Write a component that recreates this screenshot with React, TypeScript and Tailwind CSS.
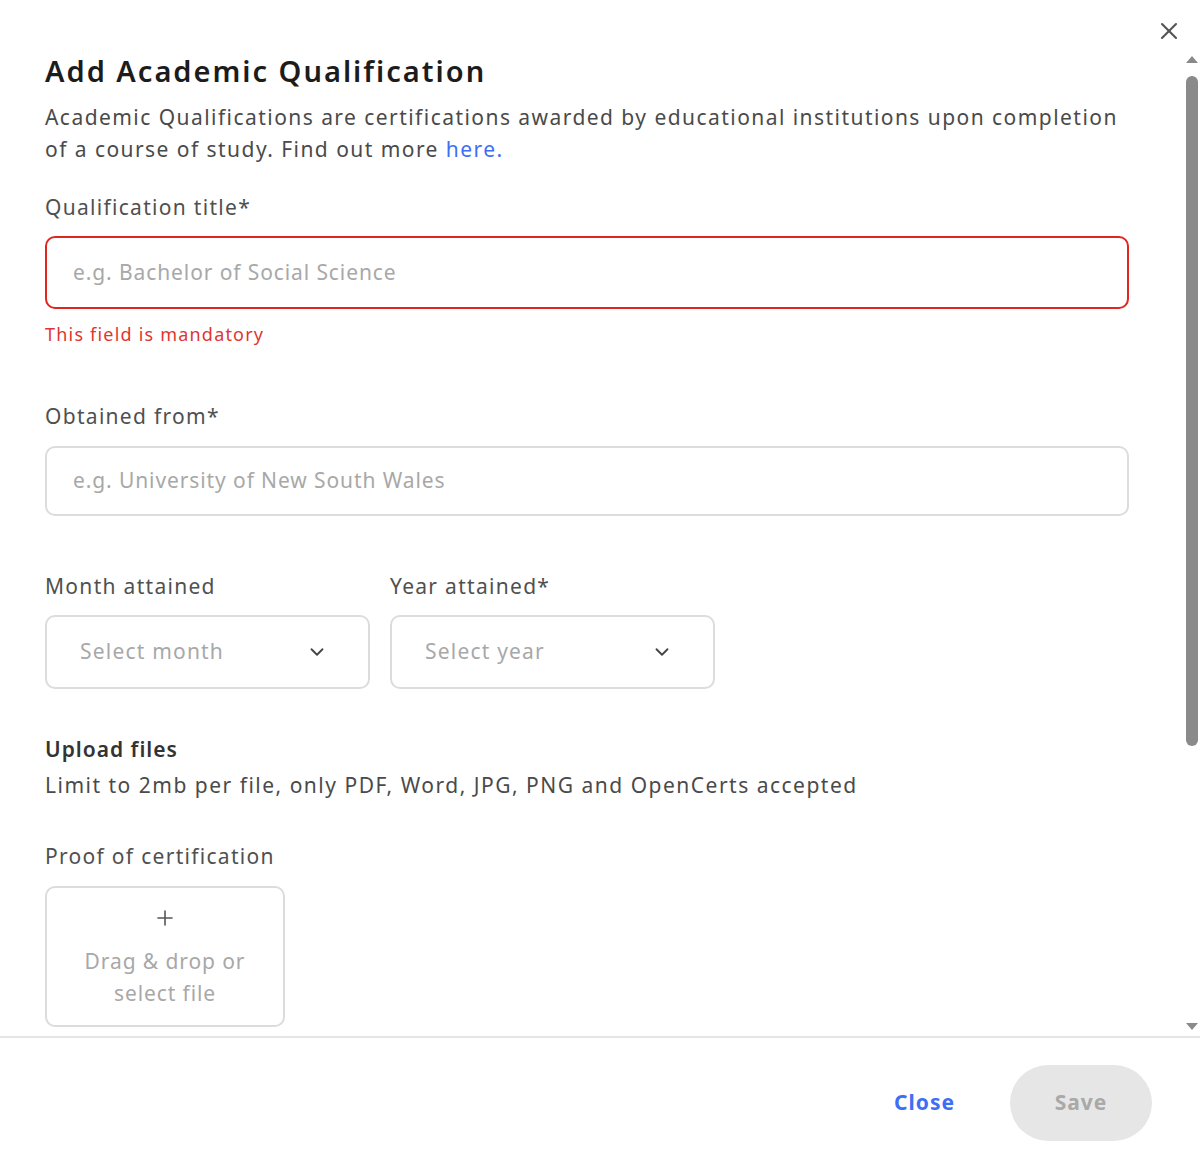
import React from 'react';
import { X, ChevronDown, Plus } from 'lucide-react';

const Label = ({ children }: { children: React.ReactNode }) => (
  <p className="text-[21px] leading-[32px] tracking-[1.3px] text-[#505050]">{children}</p>
);

const SelectBox = ({ placeholder }: { placeholder: string }) => (
  <div className="w-[325px] h-[74px] border-2 border-[#dcdcdc] rounded-[10px] flex items-center justify-between pl-[33px] pr-[40px]">
    <span className="text-[21px] tracking-[1.2px] text-[#a8a8a8]">{placeholder}</span>
    <ChevronDown size={22} strokeWidth={2} className="text-[#444]" />
  </div>
);

const Scrollbar = () => (
  <div className="w-[16px] flex flex-col items-center pt-[3px] pb-[6px]">
    <div className="w-0 h-0 border-l-[6px] border-r-[6px] border-b-[7px] border-l-transparent border-r-transparent border-b-[#8a8a8a]" />
    <div className="w-[12px] h-[670px] mt-[13px] rounded-full bg-[#8a8a8a]" />
    <div className="flex-1" />
    <div className="w-0 h-0 border-l-[6px] border-r-[6px] border-t-[7px] border-l-transparent border-r-transparent border-t-[#8a8a8a]" />
  </div>
);

export default function App() {
  return (
    <div className="w-[1200px] h-[1164px] bg-white flex flex-col font-['Noto_Sans',sans-serif] overflow-hidden">
      <div className="h-[53px] flex justify-end items-start pt-[17px] pr-[17px]">
        <X size={28} strokeWidth={1.8} className="text-[#555]" />
      </div>

      <div className="flex h-[983px]">
        <div className="flex-1 pl-[45px] pr-[55px]">
          <h2 className="text-[29px] leading-[36px] tracking-[2px] font-semibold text-[#1c1c1c]">Add Academic Qualification</h2>
          <p className="mt-[12px] text-[21px] leading-[32px] tracking-[1.45px] text-[#4a4a4a]">
            Academic Qualifications are certifications awarded by educational institutions upon completion of a course of study. Find out more <span className="text-[#3d6ef5]">here.</span>
          </p>

          <div className="mt-[26px]">
            <Label>Qualification title*</Label>
          </div>
          <div className="mt-[13px] h-[73px] border-[2.5px] border-[#e0261f] rounded-[10px] flex items-center pl-[26px]">
            <span className="text-[21px] tracking-[0.9px] text-[#a8a8a8]">e.g. Bachelor of Social Science</span>
          </div>
          <p className="mt-[11px] text-[18px] leading-[28px] tracking-[1.2px] text-[#e0362f]">This field is mandatory</p>

          <div className="mt-[52px]">
            <Label>Obtained from*</Label>
          </div>
          <div className="mt-[14px] h-[70px] border-2 border-[#dcdcdc] rounded-[10px] flex items-center pl-[26px]">
            <span className="text-[21px] tracking-[0.9px] text-[#a8a8a8]">e.g. University of New South Wales</span>
          </div>

          <div className="mt-[54px] flex gap-[20px]">
            <div className="flex flex-col gap-[13px]">
              <Label>Month attained</Label>
              <SelectBox placeholder="Select month" />
            </div>
            <div className="flex flex-col gap-[13px]">
              <Label>Year attained*</Label>
              <SelectBox placeholder="Select year" />
            </div>
          </div>

          <p className="mt-[44px] text-[21px] leading-[32px] tracking-[1px] font-semibold text-[#333]">Upload files</p>
          <p className="mt-[4px] text-[21px] leading-[32px] tracking-[1.5px] text-[#4a4a4a]">
            Limit to 2mb per file, only PDF, Word, JPG, PNG and OpenCerts accepted
          </p>

          <div className="mt-[39px]">
            <Label>Proof of certification</Label>
          </div>
          <div className="mt-[14px] w-[240px] h-[141px] border-2 border-[#dcdcdc] rounded-[10px] flex flex-col items-center pt-[18px]">
            <Plus size={24} strokeWidth={1.6} className="text-[#555]" />
            <p className="mt-[15px] text-[21px] leading-[32px] tracking-[0.9px] text-[#a8a8a8] text-center">
              Drag &amp; drop or
              <br />
              select file
            </p>
          </div>
        </div>
        <Scrollbar />
      </div>

      <div className="border-t-2 border-[#e6e6e6] flex-1 flex items-center justify-end pt-[3px] pr-[48px] gap-[55px]">
        <button className="text-[21px] font-bold tracking-[1px] text-[#3d6ef5]">Close</button>
        <button className="w-[142px] h-[76px] rounded-full bg-[#e6e6e6] text-[21px] font-bold tracking-[1px] text-[#a9a9a9]">Save</button>
      </div>
    </div>
  );
}
